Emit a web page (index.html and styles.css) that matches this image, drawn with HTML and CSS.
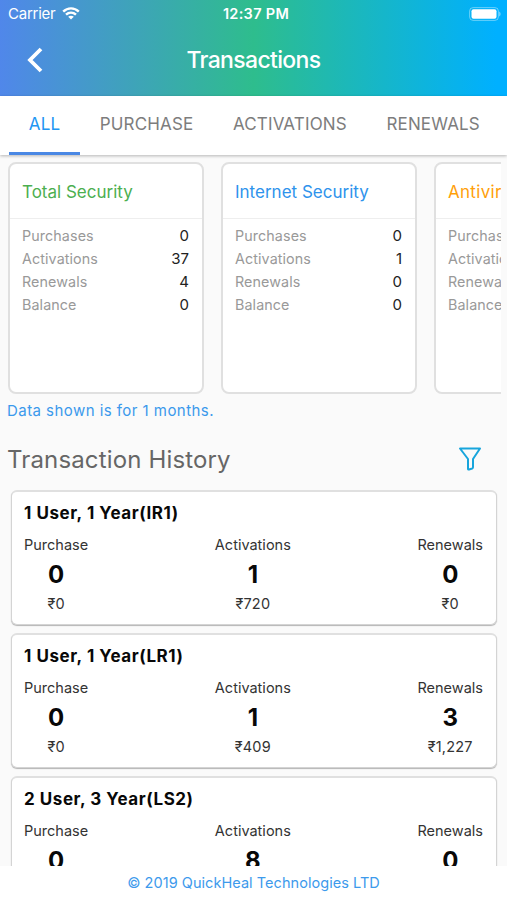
FILE: index.html
```html
<!DOCTYPE html>
<html lang="en">
<head>
<meta charset="utf-8">
<title>Transactions</title>
<link rel="stylesheet" href="styles.css">
</head>
<body>
<div class="app">
  <header class="header">
    <div class="status">
      <div class="carrier"><span>Carrier</span>
        <svg class="wifi" width="18" height="13" viewBox="0 0 18 13" fill="none" stroke="#fff" stroke-width="2.4"><path d="M1.200 4.600C5.600.3 12.400.3 16.800 4.600"/><path d="M4 7.700C6.900 5 11.100 5 14 7.700"/><path d="M9 12.400L6.200 9.700C7.800 8.300 10.200 8.300 11.800 9.700Z" fill="#fff" stroke="none"/></svg>
      </div>
      <span class="clock">12:37 PM</span>
      <svg class="battery" width="32" height="14" viewBox="0 0 32 14"><rect x=".6" y=".6" width="28.800" height="12.800" rx="3.500" fill="none" stroke="#fff" stroke-opacity=".4"/><rect x="2.500" y="2.300" width="25" height="9.400" rx="2" fill="#fff"/><path d="M30.200 4.500c1.800.8 1.800 4.200 0 5z" fill="#fff" fill-opacity=".5"/></svg>
    </div>
    <div class="bar">
      <svg class="back" width="16" height="26" viewBox="0 0 16 26" fill="none" stroke="#fff" stroke-width="3.800"><path d="M14 2L3 13l11 11"/></svg>
      <h1 class="title">Transactions</h1>
    </div>
  </header>
  <nav class="tabs">
    <a class="tab active"><span>ALL</span></a>
    <a class="tab"><span>PURCHASE</span></a>
    <a class="tab"><span>ACTIVATIONS</span></a>
    <a class="tab"><span>RENEWALS</span></a>
  </nav>
  <main class="content">
    <section class="products">
      <article class="product">
        <h2 class="name green">Total Security</h2>
        <dl class="stats"><dt>Purchases</dt><dd>0</dd><dt>Activations</dt><dd>37</dd><dt>Renewals</dt><dd>4</dd><dt>Balance</dt><dd>0</dd></dl>
      </article>
      <article class="product">
        <h2 class="name blue">Internet Security</h2>
        <dl class="stats"><dt>Purchases</dt><dd>0</dd><dt>Activations</dt><dd>1</dd><dt>Renewals</dt><dd>0</dd><dt>Balance</dt><dd>0</dd></dl>
      </article>
      <article class="product">
        <h2 class="name orange">Antivirus</h2>
        <dl class="stats"><dt>Purchases</dt><dd></dd><dt>Activations</dt><dd></dd><dt>Renewals</dt><dd></dd><dt>Balance</dt><dd></dd></dl>
      </article>
    </section>
    <p class="note">Data shown is for 1 months.</p>
    <div class="history-head">
      <h2 class="history-title">Transaction History</h2>
      <svg class="filter" width="24" height="26" viewBox="0 0 24 26" fill="none" stroke="#18a5dc" stroke-width="2" stroke-linejoin="round"><path d="M2 2.500h20L15 13v8.300q0 .9-.8 1.200l-3.200 1q-1 .3-1-.8V13Z"/></svg>
    </div>
    <section class="history">
      <article class="plan">
        <h3 class="plan-name">1 User, 1 Year(IR1)</h3>
        <div class="figures">
          <div class="figure"><span>Purchase</span><b>0</b><span class="amount">₹0</span></div>
          <div class="figure"><span>Activations</span><b>1</b><span class="amount">₹720</span></div>
          <div class="figure"><span>Renewals</span><b>0</b><span class="amount">₹0</span></div>
        </div>
      </article>
      <article class="plan">
        <h3 class="plan-name">1 User, 1 Year(LR1)</h3>
        <div class="figures">
          <div class="figure"><span>Purchase</span><b>0</b><span class="amount">₹0</span></div>
          <div class="figure"><span>Activations</span><b>1</b><span class="amount">₹409</span></div>
          <div class="figure"><span>Renewals</span><b>3</b><span class="amount">₹1,227</span></div>
        </div>
      </article>
      <article class="plan">
        <h3 class="plan-name">2 User, 3 Year(LS2)</h3>
        <div class="figures">
          <div class="figure"><span>Purchase</span><b>0</b></div>
          <div class="figure"><span>Activations</span><b>8</b></div>
          <div class="figure"><span>Renewals</span><b>0</b></div>
        </div>
      </article>
    </section>
  </main>
  <footer class="footer">© 2019 QuickHeal Technologies LTD</footer>
</div>
</body>
</html>
```
FILE: styles.css
```css
* { box-sizing: border-box; margin: 0; padding: 0; }
body { font-family: Inter, "Liberation Sans", sans-serif; background: #fafafa; color: #222; }
.app { width: 507px; height: 900px; display: flex; flex-direction: column; overflow: hidden; }

.header { flex: none; height: 96px; color: #fff; background: linear-gradient(90deg, #5087ea 0%, #2ebd8d 50%, #00b0ff 98%); }
.status { height: 27px; padding: 0 6px 0 8px; display: grid; grid-template-columns: 1fr auto 1fr; align-items: center; font-size: 15px; line-height: 27px; }
.carrier { display: flex; align-items: center; gap: 7px; letter-spacing: -0.25px; }
.clock { font-weight: 600; font-size: 14.5px; letter-spacing: 0.3px; padding-left: 3px; }
.battery { justify-self: end; }
.bar { height: 66px; display: grid; grid-template-columns: 60px 1fr 60px; align-items: center; }
.back { margin-left: 27px; }
.title { text-align: center; font-size: 23px; font-weight: 500; line-height: 30px; letter-spacing: -0.65px; }

.tabs { flex: none; height: 59px; padding-left: 9px; display: flex; background: #fff; position: relative; box-shadow: 0 1px 3px rgba(0, 0, 0, .28); }
.tab { padding: 0 19.8px; line-height: 57px; font-size: 17px; letter-spacing: 0.15px; color: #7d7d7d; white-space: nowrap; }
.tab.active { color: #2196f3; border-bottom: 3px solid #4a88e4; }

.content { flex: 1; min-height: 0; overflow: hidden; }
.products { margin: 7px 6px 0 8px; height: 234px; display: flex; gap: 17px; overflow: hidden; padding: 0 0 2px 0; }
.product { flex: none; width: 196px; height: 232px; background: #fff; border: 2px solid #e0e0e0; border-radius: 8px; }
.name { height: 55px; border-bottom: 1px solid #eee; padding-left: 12px; line-height: 56px; font-size: 17px; font-weight: 400; white-space: nowrap; }
.green { color: #4caf50; }
.blue { color: #2e93ec; }
.orange { color: #ff9f0a; letter-spacing: 0.3px; }
.stats { padding: 5px 13px 0 12px; display: grid; grid-template-columns: 1fr auto; grid-auto-rows: 23.1px; line-height: 23px; font-size: 15px; }
.stats dt { color: #999; font-size: 14.3px; letter-spacing: 0.1px; }
.stats dd { color: #222; text-align: right; }
.note { margin: 4px 0 0 7px; line-height: 22px; font-size: 15px; letter-spacing: 0.45px; color: #3a99ec; }
.history-head { margin-top: 14px; padding: 0 25px 0 7px; height: 46px; display: flex; align-items: center; justify-content: space-between; }
.history-title { font-size: 24px; font-weight: 400; color: #666; letter-spacing: 0.15px; }

.history { padding: 8px 10px 0 11px; display: flex; flex-direction: column; gap: 8px; }
.plan { height: 135px; padding: 12px 13px 0 12px; background: #fff; border: 1px solid #d4d4d4; border-top: 2px solid #e0e0e0; border-radius: 6px; box-shadow: 0 1px 1px rgba(0, 0, 0, .28); }
.plan-name { line-height: 18px; padding-bottom: 2px; font-size: 17px; font-weight: 700; color: #080808; letter-spacing: 0.55px; }
.figures { margin-top: 11px; display: flex; justify-content: space-between; }
.figure { display: flex; flex-direction: column; align-items: center; line-height: 20px; font-size: 14.5px; color: #333; }
.figure b { line-height: 32px; margin-top: 4px; font-size: 24px; font-weight: 700; color: #080808; }
.amount { margin-top: 2.5px; letter-spacing: 0.2px; }
.footer { flex: none; height: 34px; background: #fff; text-align: center; line-height: 34px; font-size: 14.5px; letter-spacing: 0.05px; color: #3d9aec; position: relative; }
```
